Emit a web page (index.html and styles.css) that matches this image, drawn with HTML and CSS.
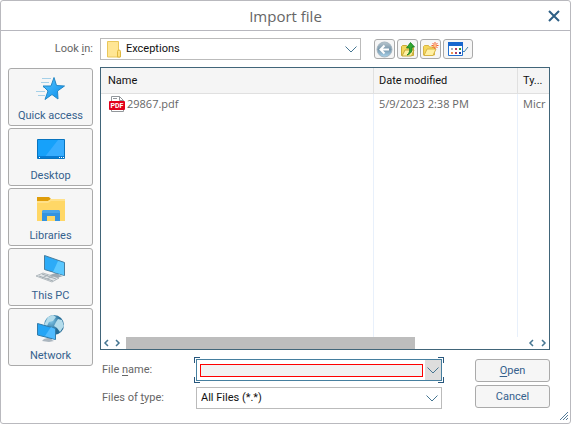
FILE: index.html
```html
<!DOCTYPE html>
<html lang="en">
<head>
<meta charset="utf-8">
<title>Import file</title>
<link rel="stylesheet" href="styles.css">
</head>
<body>
<main class="dialog">
  <header class="titlebar">
    <h1>Import file</h1>
    <button class="close" type="button" aria-label="Close">
      <svg width="12" height="12" viewBox="0 0 12 12"><path d="M1 1L11 11M11 1L1 11" fill="none" stroke="#2d5f85" stroke-width="2"/></svg>
    </button>
  </header>

  <form class="content">
    <label class="look-label" for="folder">Look <u>i</u>n:</label>
    <div class="toolbar">
      <div class="combo folder-combo">
        <svg class="folder-icon" width="14" height="17" viewBox="0 0 14 17"><path d="M.5.5h11v9l1.500 1v5.500H.5z" fill="#ffe694" stroke="#e9c75a"/><path d="M10.500 10.500q0-1.500 1.500-1.500t1.500 1.500v5.500h-3z" fill="#ffe080" stroke="#dfb83e"/></svg>
        <select id="folder"><option>Exceptions</option></select>
        <svg class="chevron" width="12" height="7" viewBox="0 0 12 7"><path d="M.5.5L6 6L11.500.5"/></svg>
      </div>
      <div class="tools">
        <button class="tool" type="button" aria-label="Back">
          <svg width="17" height="17" viewBox="0 0 17 17"><defs><linearGradient id="orb" x2="0" y2="1"><stop stop-color="#b9c6ce"/><stop offset=".5" stop-color="#7897ac"/><stop offset="1" stop-color="#a9d4ed"/></linearGradient></defs><circle cx="8.500" cy="8.500" r="7.500" fill="url(#orb)" stroke="#a5b5c0"/><path d="M8.500 4.500L4.500 8.500l4 4M5 8.500h8" fill="none" stroke="#fff" stroke-width="2"/></svg>
        </button>
        <button class="tool" type="button" aria-label="Up one level">
          <svg width="16" height="17" viewBox="0 0 16 17"><path d="M1.500 14.500v-9l1-1h4l1 2h6v8z" fill="#f4d65c" stroke="#c9ac35"/><path d="M2 15l3-6h9l-2.500 6z" fill="#fff0a0" stroke="#c4a93a"/><path d="M7 14c2.500-2 3-4 2.500-7H6.500L10.500 1.500l4 4.500H12c.5 4-1 7-5 8z" fill="#32a932" stroke="#137b1d" stroke-width=".8"/></svg>
        </button>
        <button class="tool" type="button" aria-label="Create new folder">
          <svg width="17" height="17" viewBox="0 0 17 17"><path d="M1.500 14V5.500l1-1h4l1 1.500h5V14z" fill="#f5d75c" stroke="#d8b545"/><path d="M2 14.500l3-6.500h9l-3 6.500z" fill="#fff0a5" stroke="#d8b545"/><path d="M13 1v7M9.500 4.500h7M10.500 2l5 5M15.500 2l-5 5" stroke="#f45b2b"/><circle cx="13" cy="4.500" r="1.500" fill="#ffc083"/></svg>
        </button>
        <button class="tool tool-wide" type="button" aria-label="View menu">
          <svg width="21" height="15" viewBox="0 0 21 15"><path d="M.5.500h14v13H.5z" fill="#fff" stroke="#216fd0"/><path d="M0 0h15v4H0z" fill="#1766ce"/><path d="M3 6h2v2H3z" fill="#a7b0bb"/><path d="M7 6h2v2H7zM7 10h2v2H7z" fill="#b23f63"/><path d="M11 6h2v2h-2z" fill="#2b9a43"/><path d="M3 10h2v2H3z" fill="#ef9454"/><path d="M11 10h2v2h-2z" fill="#163b9f"/><path d="M15 9l1 1 4-5" fill="none" stroke="#4384aa"/></svg>
        </button>
      </div>
    </div>

    <nav class="places" aria-label="Places">
      <button class="place" type="button">
        <svg width="30" height="26" viewBox="0 0 30 26"><defs><linearGradient id="star" x2="1" y2="1"><stop stop-color="#58c6ff"/><stop offset="1" stop-color="#078beb"/></linearGradient></defs><path d="M6 2.500h9M5 6.500h8M0 15.500h9M2 19.500h7M7 11.500h4" stroke="#a5d0e8"/><path d="M18 1.500L20.500 9.500l8 .5-7 5 .5 8-6-4.500-7 5 3-8.500-5-5h8z" fill="url(#star)" stroke="#2387c5"/></svg>
        <span>Quick access</span>
      </button>
      <button class="place" type="button">
        <svg width="28" height="26" viewBox="0 0 28 26"><path d="M.5 3.500h27v19H.5z" fill="#16a1fa" stroke="#0874bf"/><path d="M7 22L21 4h6v18z" fill="#38adff"/><path d="M1 20h26v2H1z" fill="#087bd2"/><path d="M2 21.500h1M22 21.500h1M24 21.500h1M26 21.500h1" stroke="#fff"/></svg>
        <span>Desktop</span>
      </button>
      <button class="place" type="button">
        <svg width="28" height="26" viewBox="0 0 28 26"><path d="M0 1h12l2 2-3 4H0z" fill="#df9d0b"/><path d="M0 5h11l3-2h14v22H0z" fill="#ffd766"/><path d="M0 5h11l3-2h14v2H14l-3 2H0z" fill="#ffe18a"/><path d="M5 25V16q0-2 2-2h14q2 0 2 2v9h-5v-5h-8v5z" fill="#3493df"/><path d="M5 17q0-3 2-3h14q2 0 2 3z" fill="#4ba5e9"/></svg>
        <span>Libraries</span>
      </button>
      <button class="place" type="button">
        <svg width="32" height="28" viewBox="0 0 32 28"><path d="M15 20l8-3 1 3 4 1-6 2-7-1z" fill="#9ba9b3"/><path d="M9.500.5l20 7v13l-20-6z" fill="#2cabf7" stroke="#487d9d"/><path d="M18 17l5-11 6 2v12z" fill="#5bc8ff"/><path d="M1 21l7-3 16 5-7 4z" fill="#e1e5e8" stroke="#9ba5ab" stroke-width=".7"/><path d="M4 21l14 5M7 19l14 5M7 23l6-3M12 24l6-3" stroke="#a3adb3"/></svg>
        <span>This PC</span>
      </button>
      <button class="place" type="button">
        <svg width="30" height="30" viewBox="0 0 30 30"><defs><radialGradient id="globe" cx=".35" cy=".3"><stop stop-color="#83c8e9"/><stop offset="1" stop-color="#246b96"/></radialGradient></defs><circle cx="18" cy="11" r="10" fill="url(#globe)"/><path d="M12 3l5-2 3 2-3 4-4 1-2 4-3-1zM22 5l4 1 2 6-4 6-3-4-3-2 2-4z" fill="#b4dceb"/><path d="M8 25l7-2 1 3 2 1-5 1-7-1z" fill="#abb6bf"/><path d="M1.500 9.500l18 5v11l-18-4.500z" fill="#25a5f5" stroke="#347ba8"/><path d="M9 22l6-9 4 2v10z" fill="#50bbff"/></svg>
        <span>Network</span>
      </button>
    </nav>

    <section class="files" aria-label="Files">
      <div class="file-view">
        <table>
          <colgroup><col class="col-name"><col class="col-date"><col></colgroup>
          <thead><tr><th>Name</th><th>Date modified</th><th>Ty...</th></tr></thead>
          <tbody>
            <tr class="file">
              <td><span class="file-name"><svg width="16" height="16" viewBox="0 0 16 16"><path d="M2.500 15.500V.5h8l4 4v11z" fill="#fff" stroke="#92979b"/><path d="M10.500.5v4h4M4 2.500h4" fill="none" stroke="#92979b"/><rect y="5" width="16" height="9" rx="1" fill="#e2001b"/><text x="8" y="12" text-anchor="middle" class="pdf-text">PDF</text></svg>29867.pdf</span></td>
              <td>5/9/2023 2:38 PM</td><td>Micr</td>
            </tr>
            <tr><td></td><td></td><td></td></tr>
          </tbody>
        </table>
      </div>
      <div class="scrollbar">
        <svg width="22" height="8" viewBox="0 0 22 8"><path d="M7 1L4 4l3 3M15 1l3 3-3 3"/></svg>
        <div class="track"><div class="thumb"></div></div>
        <svg width="22" height="8" viewBox="0 0 22 8"><path d="M6 1L3 4l3 3M15 1l3 3-3 3"/></svg>
      </div>
    </section>

    <div class="footer">
      <div class="fields">
        <label for="name">File <u>n</u>ame:</label>
        <div class="combo name-combo">
          <input id="name" type="text">
          <button type="button" class="drop" aria-label="Show recent names"><svg width="12" height="7" viewBox="0 0 12 7"><path d="M.5.5L6 6L11.500.5"/></svg></button>
          <i class="corner top-left"></i><i class="corner top-right"></i><i class="corner bottom-left"></i><i class="corner bottom-right"></i>
        </div>
        <label for="type">Files of <u>t</u>ype:</label>
        <div class="combo">
          <select id="type"><option>All Files (*.*)</option></select>
          <svg class="chevron" width="12" height="7" viewBox="0 0 12 7"><path d="M.5.5L6 6L11.500.5"/></svg>
        </div>
      </div>
      <div class="actions">
        <button type="submit"><span><u>O</u>pen</span></button>
        <button type="button">Cancel</button>
      </div>
    </div>
  </form>
  <svg class="grip" width="8" height="8" viewBox="0 0 8 8"><path d="M0 8L8 0M3 8l5-5M6 8l2-2" stroke="#537b99"/></svg>
</main>
</body>
</html>
```
FILE: styles.css
```css
* { box-sizing: border-box; }
body { margin: 0; background: #fff; color: #666; font: 11px/16px Roboto, sans-serif; }
button, input, select { margin: 0; padding: 0; font: inherit; color: inherit; }
svg { display: block; flex: none; }
u { text-decoration: underline; text-underline-offset: 2px; }

.dialog { position: relative; display: flex; flex-direction: column; min-height: 100vh; border: 1px solid #b9b9be; border-radius: 3px; }
.titlebar { position: relative; display: flex; align-items: center; justify-content: center; height: 30px; border-bottom: 1px solid #b7b7be; }
h1 { margin: 0; font: 15px/20px "Open Sans", sans-serif; }
.close { position: absolute; right: 10px; top: 9px; border: 0; background: none; }

.content { flex: 1; display: grid; grid-template-columns: 85px minmax(0, 1fr); grid-template-rows: 22px minmax(283px, 1fr) auto; gap: 7px; padding: 7px 20px 14px 7px; }
.look-label { align-self: center; justify-self: end; }
.toolbar { display: flex; gap: 13px; padding-right: 77px; }
.folder-combo { flex: 1; min-width: 120px; }
.tools { display: flex; gap: 2px; margin: 1px 0; }
.tool, .place, .actions button { border: 1px solid #aaa; border-radius: 3px; background: #f6f6f6; display: flex; align-items: center; justify-content: center; }
.tool { width: 21px; height: 20px; }
.tool-wide { width: 30px; }

.combo { position: relative; display: flex; height: 22px; color: #111; }
.combo select { width: 100%; appearance: none; border: 1px solid #bbb; border-radius: 0; background: #fff; padding: 0 20px 0 4px; }
.folder-combo select { padding-left: 25px; }
.folder-icon { position: absolute; left: 7px; top: 3px; }
.chevron { position: absolute; right: 4px; top: 8px; pointer-events: none; }
.chevron path, .drop path, .scrollbar path { fill: none; stroke: #467692; }

.places { grid-row: 2 / span 2; display: flex; flex-direction: column; gap: 2px; padding-top: 1px; }
.place { height: 58px; flex-direction: column; justify-content: flex-end; padding-bottom: 1px; color: #35618d; }
.place svg { margin: auto; }

.files { display: flex; flex-direction: column; border: 1px solid #416579; min-width: 0; }
.file-view { flex: 1; display: flex; overflow: hidden; }
table { width: 100%; table-layout: fixed; border-collapse: separate; border-spacing: 0; }
.col-name { width: 273px; }
.col-date { width: 144px; }
th, td { padding: 0 0 0 5px; text-align: left; white-space: nowrap; overflow: hidden; }
th { height: 26px; border-right: 1px solid #e0e0e0; border-bottom: 1px solid #e0e0e0; background: #f5f5f5; color: #111; font-weight: 400; }
td { border-right: 1px solid #e8f0fb; font-family: "Open Sans", sans-serif; }
th:last-child, td:last-child { border-right: 0; }
th:first-child, td:first-child { padding-left: 7px; }
.file td { height: 20px; }
.file-name { display: flex; align-items: center; gap: 2px; padding-left: 1px; }
.pdf-text { fill: #fff; font: bold 7px Roboto, sans-serif; }
.scrollbar { display: flex; align-items: center; height: 12px; }
.scrollbar path { stroke-width: 1.5; }
.track { flex: 1; align-self: stretch; margin: 0 5px 0 3px; }
.thumb { width: 73%; height: 100%; background: #bdbdbd; }

.footer { grid-column: 2; display: flex; gap: 33px; padding-top: 2px; }
.fields { flex: 1; display: grid; grid-template-columns: 94px minmax(0, 1fr); gap: 6px 0; align-content: start; align-items: center; margin-left: 2px; }
.name-combo { border: 1px solid #467f9f; background: #fff; }
.name-combo input { flex: 1; min-width: 0; margin: 4px 2px 3px 3px; border: 1px solid #f00; background: #f2f2f2; outline: 0; padding: 0 2px; }
.drop { display: flex; align-items: center; justify-content: center; width: 16px; border: 0; background: #ddd; }
.corner { position: absolute; width: 6px; height: 6px; border: 0 solid #28577d; }
.top-left { left: -3px; top: -3px; border-width: 1px 0 0 1px; }
.top-right { right: -3px; top: -3px; border-width: 1px 1px 0 0; }
.bottom-left { left: -3px; bottom: -3px; border-width: 0 0 1px 1px; }
.bottom-right { right: -3px; bottom: -3px; border-width: 0 1px 1px 0; }
.actions { display: flex; flex-direction: column; gap: 3px; width: 75px; }
.actions button { height: 23px; color: #35618d; }
.grip { position: absolute; right: 2px; bottom: 3px; }
```
